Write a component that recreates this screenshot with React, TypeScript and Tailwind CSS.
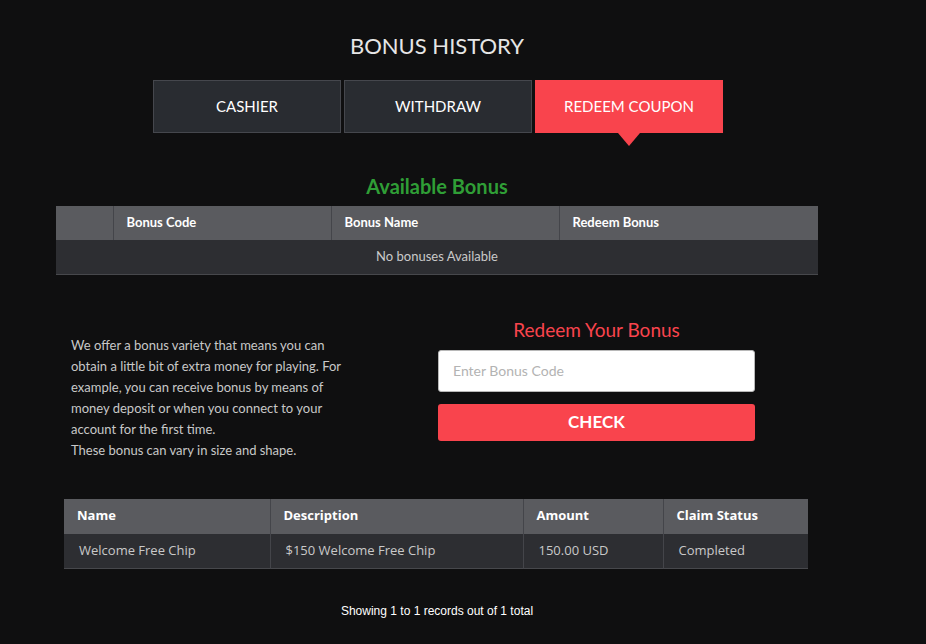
export default function App() {
  const tabs = [
    { label: 'CASHIER', active: false },
    { label: 'WITHDRAW', active: false },
    { label: 'REDEEM COUPON', active: true },
  ];

  const history = [
    { name: 'Welcome Free Chip', desc: '$150 Welcome Free Chip', amount: '150.00 USD', status: 'Completed' },
  ];

  return (
    <div className="min-h-[644px] w-full bg-[#0f0f10] font-['Lato',sans-serif]">
      <div className="w-[874px] flex flex-col items-center pt-[33px]">
        <h1 className="text-[22px] leading-[26px] text-[#e6e6e6]">BONUS HISTORY</h1>

        {/* tabs */}
        <div className="mt-[21px] flex gap-[3px] pl-[2px]">
          {tabs.map((t) => (
            <div key={t.label} className="relative">
              <div
                className={`w-[188px] h-[53px] flex items-center justify-center text-[15px] text-white ${
                  t.active ? 'bg-[#f9444d]' : 'bg-[#292c31] border border-[#45474d]'
                }`}
              >
                {t.label}
              </div>
              {t.active && (
                <div className="absolute left-1/2 -translate-x-1/2 top-[53px] w-0 h-0 border-l-[11px] border-r-[11px] border-t-[13px] border-l-transparent border-r-transparent border-t-[#f9444d]" />
              )}
            </div>
          ))}
        </div>

        <h2 className="mt-[40px] text-[20px] leading-[26px] font-bold text-[#2f9e36]">Available Bonus</h2>

        {/* available bonus table */}
        <table className="mt-[7px] w-[762px] border-collapse text-[13px]">
          <thead>
            <tr className="bg-[#5a5b5f] text-white h-[34px]">
              <th className="w-[57px] border-r border-[#44454a]"></th>
              <th className="w-[218px] text-left pl-[13px] font-bold border-r border-[#44454a]">Bonus Code</th>
              <th className="w-[228px] text-left pl-[13px] font-bold border-r border-[#44454a]">Bonus Name</th>
              <th className="text-left pl-[13px] font-bold">Redeem Bonus</th>
            </tr>
          </thead>
          <tbody>
            <tr className="bg-[#2d2e32] h-[34px] border-b border-[#47484c]">
              <td colSpan={4} className="text-center text-[#c9c9c9]">No bonuses Available</td>
            </tr>
          </tbody>
        </table>

        {/* redeem section */}
        <div className="mt-[42px] w-[762px] flex">
          <div className="w-[382px] pl-[15px] pt-[18px] text-[13px] leading-[21px] text-[#c8c8c8]">
            <p className="w-[285px]">
              We offer a bonus variety that means you can obtain a little bit of extra money for playing. For example,
              you can receive bonus by means of money deposit or when you connect to your account for the first time.
            </p>
            <p>These bonus can vary in size and shape.</p>
          </div>
          <div className="w-[317px] flex flex-col">
            <h3 className="text-center text-[19px] leading-[26px] text-[#f9444d]">Redeem Your Bonus</h3>
            <input
              placeholder="Enter Bonus Code"
              className="mt-[7px] h-[42px] w-full rounded-[3px] bg-white border border-[#b8b8b8] px-[14px] text-[14px] text-[#333] placeholder:text-[#b3b3b3] outline-none"
            />
            <button className="mt-[12px] h-[37px] w-full rounded-[3px] bg-[#f9444d] text-white text-[17px] font-bold">
              CHECK
            </button>
          </div>
        </div>

        {/* history table */}
        <table className="mt-[38px] w-[744px] border-collapse text-[13px] font-['Open_Sans',sans-serif] mr-[2px]">
          <thead>
            <tr className="bg-[#5a5b5f] text-white h-[35px]">
              <th className="w-[206px] text-left pl-[13px] font-bold border-r border-[#44454a]">Name</th>
              <th className="w-[253px] text-left pl-[13px] font-bold border-r border-[#44454a]">Description</th>
              <th className="w-[140px] text-left pl-[13px] font-bold border-r border-[#44454a]">Amount</th>
              <th className="text-left pl-[13px] font-bold">Claim Status</th>
            </tr>
          </thead>
          <tbody>
            {history.map((h) => (
              <tr key={h.name} className="bg-[#2d2e32] h-[35px] text-[#c9c9c9] border-b border-[#47484c]">
                <td className="pl-[15px] border-r border-[#44454a]">{h.name}</td>
                <td className="pl-[15px] border-r border-[#44454a]">{h.desc}</td>
                <td className="pl-[15px] border-r border-[#44454a]">{h.amount}</td>
                <td className="pl-[15px]">{h.status}</td>
              </tr>
            ))}
          </tbody>
        </table>

        <p className="mt-[33px] text-[12px] text-white font-['Liberation_Sans',sans-serif]">
          Showing 1 to 1 records out of 1 total
        </p>
      </div>
    </div>
  );
}
